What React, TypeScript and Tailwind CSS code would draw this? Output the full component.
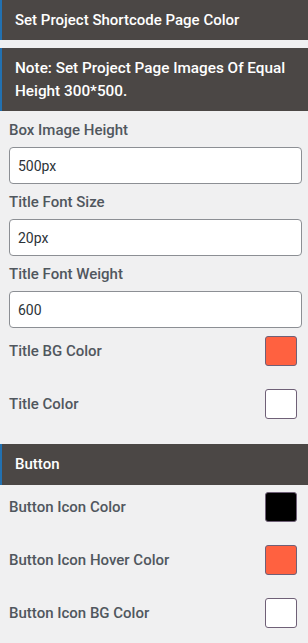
import React from 'react';

const font = { fontFamily: 'Roboto, "Noto Sans", sans-serif' };

function SectionHeader({ children, className = '' }: { children: React.ReactNode; className?: string }) {
  return (
    <div
      className={`bg-[#4b4745] border-l-2 border-[#2271b1] pl-[13px] pr-2 text-white font-medium flex items-center ${className}`}
    >
      {children}
    </div>
  );
}

function TextField({ label, value }: { label: string; value: string }) {
  return (
    <div className="flex flex-col">
      <label className="h-5 leading-5 text-[15px] font-medium text-[#50575e]">{label}</label>
      <input
        type="text"
        defaultValue={value}
        className="mt-[7px] h-[37px] w-full rounded-[4px] border border-[#8c8f94] bg-white px-[8px] text-[14px] text-[#2c3338] outline-none"
      />
    </div>
  );
}

function ColorRow({ label, color }: { label: string; color: string }) {
  return (
    <div className="flex h-[30px] items-center justify-between pr-[5px]">
      <span className="text-[15px] font-medium text-[#50575e]">{label}</span>
      <span
        className="block h-[30px] w-[32px] rounded-[3px] border border-[#6f6077]"
        style={{ backgroundColor: color }}
      />
    </div>
  );
}

export default function App() {
  return (
    <div className="min-h-[643px] w-[308px] bg-[#f0f0f1]" style={font}>
      <SectionHeader className="h-[40px] text-[15px]">Set Project Shortcode Page Color</SectionHeader>

      <SectionHeader className="mt-2 h-[63px] text-[15.3px] leading-[23px]">
        Note: Set Project Page Images Of Equal Height 300*500.
      </SectionHeader>

      <div className="pl-[9px] pr-[6px] pt-[9px] flex flex-col gap-2">
        <TextField label="Box Image Height" value="500px" />
        <TextField label="Title Font Size" value="20px" />
        <TextField label="Title Font Weight" value="600" />
      </div>

      <div className="pl-[9px] pr-[6px] pt-2 flex flex-col gap-[23px]">
        <ColorRow label="Title BG Color" color="#ff6140" />
        <ColorRow label="Title Color" color="#ffffff" />
      </div>

      <SectionHeader className="mt-[25px] h-[41px] text-[15px]">Button</SectionHeader>

      <div className="pl-[9px] pr-[6px] pt-[7px] flex flex-col gap-[23px]">
        <ColorRow label="Button Icon Color" color="#000000" />
        <ColorRow label="Button Icon Hover Color" color="#ff6140" />
        <ColorRow label="Button Icon BG Color" color="#ffffff" />
      </div>
    </div>
  );
}
